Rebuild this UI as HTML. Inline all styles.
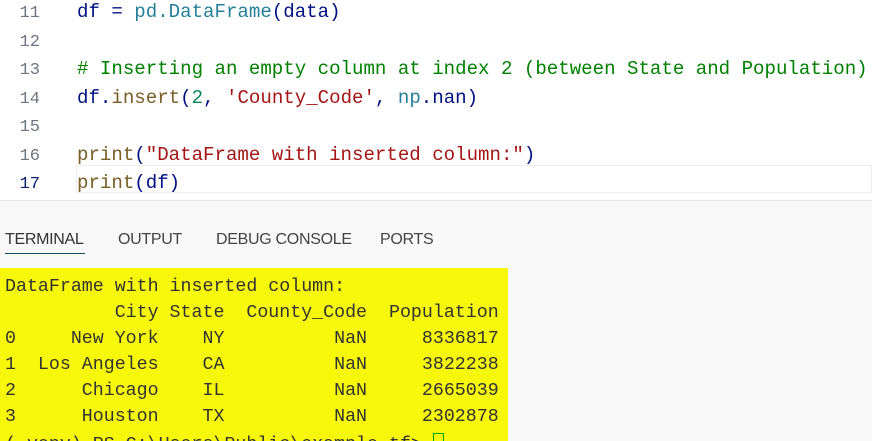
<!DOCTYPE html>
<html><head><meta charset="utf-8"><style>
html,body{margin:0;width:872px;height:441px;overflow:hidden}
body{background:#fff;position:relative;font-family:"Liberation Mono",monospace}
.ln{position:absolute;left:0;width:40px;text-align:right;color:#6e7681;font-size:17px}
.code{position:absolute;left:77px;font-size:19.1px;white-space:pre;color:#001080}
.k{color:#795e26}.s{color:#a31515}.c{color:#008000}.t{color:#267f99}.n{color:#098658}.v{color:#001080}
.tab{position:absolute;top:231px;font-family:"Liberation Sans",sans-serif;font-size:16px;color:#444;letter-spacing:-0.3px}
.term{position:absolute;left:0;top:268px;width:508px;height:173px;background:#f7f70a;overflow:hidden}
.tl{position:absolute;left:5px;font-size:18.3px;white-space:pre;color:#333}
</style></head><body>
<div style="position:absolute;left:76px;top:165px;width:796px;height:28px;border:1px solid #eee;box-sizing:border-box"></div>
<div style="position:absolute;left:0;top:200px;width:872px;height:241px;background:#f8f8f8;border-top:1px solid #e5e5e5"></div>
<div class="ln" style="top:4px">11</div><div class="code" style="top:1px">df = <span class="t">pd.DataFrame</span>(data)</div>
<div class="ln" style="top:33px">12</div>
<div class="ln" style="top:61px">13</div><div class="code c" style="top:58px"># Inserting an empty column at index 2 (between State and Population)</div>
<div class="ln" style="top:90px">14</div><div class="code" style="top:87px">df.<span class="k">insert</span>(<span class="n">2</span>, <span class="s">'County_Code'</span>, <span class="t">np</span>.nan)</div>
<div class="ln" style="top:118px">15</div>
<div class="ln" style="top:147px">16</div><div class="code" style="top:144px"><span class="k">print</span>(<span class="s">"DataFrame with inserted column:"</span>)</div>
<div class="ln" style="top:175px;color:#0b216f">17</div><div class="code" style="top:172px"><span class="k">print</span>(df)</div>
<div class="tab" style="left:5px;color:#333">TERMINAL</div>
<div style="position:absolute;left:5px;top:253px;width:80px;height:1px;background:#1a4a6a"></div>
<div class="tab" style="left:118px">OUTPUT</div>
<div class="tab" style="left:216px">DEBUG CONSOLE</div>
<div class="tab" style="left:380px">PORTS</div>
<div class="term">
<div class="tl" style="top:9px">DataFrame with inserted column:</div>
<div class="tl" style="top:35px">          City State  County_Code  Population</div>
<div class="tl" style="top:61px">0     New York    NY          NaN     8336817</div>
<div class="tl" style="top:87px">1  Los Angeles    CA          NaN     3822238</div>
<div class="tl" style="top:113px">2      Chicago    IL          NaN     2665039</div>
<div class="tl" style="top:139px">3      Houston    TX          NaN     2302878</div>
<div class="tl" style="top:165px">(.venv) PS C:\Users\Public\example.tf> <span style="display:inline-block;width:9px;height:16px;border:1px solid #0a0;vertical-align:-2px"></span></div>
</div>
</body></html>
